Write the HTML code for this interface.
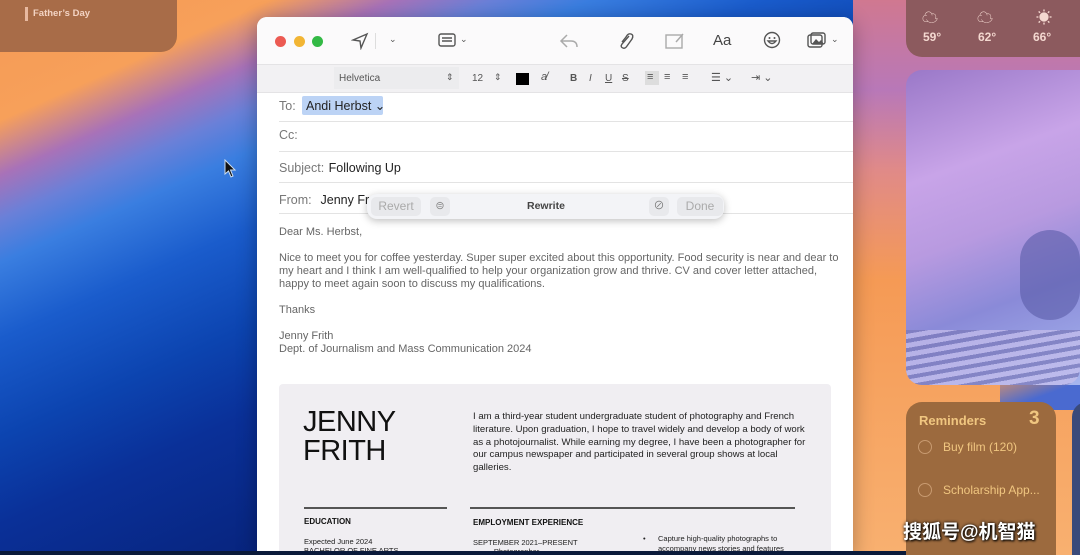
<!DOCTYPE html>
<html><head><meta charset="utf-8"><style>
*{margin:0;padding:0;box-sizing:border-box}
html,body{width:1080px;height:555px;overflow:hidden;background:#0a2a8a}
body{position:relative;font-family:"Liberation Sans","Noto Sans CJK SC",sans-serif}
.bg{position:absolute;left:0;top:0;width:1080px;height:555px;
background:linear-gradient(156deg,#f59a55 0px,#f7a05a 110px,#a872b8 160px,#6a80d8 200px,#3a7ee0 240px,#1a5ccc 310px,#0c44b0 400px,#0a3098 480px,#061e70 680px,#061e70 1200px)}
.a{position:absolute}
.win{left:257px;top:17px;width:596px;height:538px;background:#fff;border-radius:10px 10px 0 0;overflow:hidden;box-shadow:0 4px 20px rgba(0,0,0,.3)}
.tb{left:0;top:0;width:596px;height:47px;background:#fbfafb}
.fb{left:0;top:47px;width:596px;height:29px;background:#f2f1f3;border-top:1px solid #e4e3e5;border-bottom:1px solid #e4e3e5;font-size:10px;color:#555}
.dot{width:11px;height:11px;border-radius:50%;top:19px}
.line{left:22px;width:574px;height:1px;background:#e3e3e3}
.lbl{font-size:12.5px;color:#777}
.val{font-size:12.5px;color:#222}
.body{left:22px;font-size:11px;color:#666;line-height:13px}
.card{left:22px;top:367px;width:552px;height:171px;background:#f0eef2;border-radius:4px 4px 0 0}
.ic{stroke:#555;fill:none;stroke-width:1.4}
.wd{border-radius:16px}
</style></head><body>
<div class="bg"></div>
<div class="a" style="left:853px;top:0;width:227px;height:555px;background:linear-gradient(180deg,#d07890 0,#b878b8 90px,#e08a88 170px,#f59a55 280px,#f8b070 555px)"></div>
<div class="a" style="left:1000px;top:370px;width:80px;height:40px;background:linear-gradient(160deg,#f59a55,#4a6ad0 60%)"></div>
<!-- left widget -->
<div class="a wd" style="left:-20px;top:-20px;width:197px;height:72px;background:#a86c48"></div>
<div class="a" style="left:25px;top:7px;width:3px;height:14px;background:#e8b9a0"></div>
<div class="a" style="left:33px;top:8px;font-size:9.5px;font-weight:bold;color:#f3d3c3">Father’s Day</div>
<!-- right widgets -->
<div class="a wd" style="left:906px;top:-20px;width:190px;height:77px;background:#8c5a5e"></div>
<div class="a" style="left:922px;top:4px;font-size:16px;color:#f4d8d0">☁</div>
<div class="a" style="left:977px;top:4px;font-size:16px;color:#f4d8d0">☁</div>
<div class="a" style="left:1036px;top:4px;font-size:16px;color:#f4d8d0">☀</div>
<div class="a" style="left:923px;top:30px;font-size:12px;font-weight:bold;color:#f4d8d0">59°</div>
<div class="a" style="left:978px;top:30px;font-size:12px;font-weight:bold;color:#f4d8d0">62°</div>
<div class="a" style="left:1033px;top:30px;font-size:12px;font-weight:bold;color:#f4d8d0">66°</div>
<div class="a wd" style="left:906px;top:70px;width:190px;height:315px;background:linear-gradient(160deg,#9a78c8 0%,#c8a4e8 30%,#b89ae0 50%,#8a8ad8 70%,#a8b8f0 100%)"></div>
<div class="a" style="left:906px;top:330px;width:174px;height:55px;border-radius:0 0 16px 16px;background:repeating-linear-gradient(170deg,#7a78b8 0 4px,#c8c0ec 4px 9px);opacity:.7"></div>
<div class="a" style="left:1020px;top:230px;width:60px;height:90px;background:#5a5ca8;border-radius:30px;opacity:.6"></div>
<div class="a wd" style="left:906px;top:402px;width:150px;height:170px;background:#9c6a3e"></div>
<div class="a wd" style="left:1072px;top:402px;width:30px;height:170px;background:#3a4a7a"></div>
<div class="a" style="left:919px;top:413px;font-size:13px;font-weight:bold;color:#f0c680">Reminders</div>
<div class="a" style="left:1029px;top:408px;font-size:19px;font-weight:bold;color:#f0c680">3</div>
<div class="a" style="left:918px;top:440px;width:14px;height:14px;border:1.5px solid #c89a70;border-radius:50%"></div>
<div class="a" style="left:943px;top:440px;font-size:12px;color:#f0c680">Buy film (120)</div>
<div class="a" style="left:918px;top:483px;width:14px;height:14px;border:1.5px solid #c89a70;border-radius:50%"></div>
<div class="a" style="left:943px;top:483px;font-size:12px;color:#f0c680">Scholarship App...</div>
<div class="a" style="left:903px;top:517px;font-size:19px;font-weight:bold;color:#fff;text-shadow:0 0 3px #000,1px 1px 2px #000">搜狐号@机智猫</div>
<!-- cursor -->
<svg class="a" style="left:224px;top:159px" width="14" height="20"><path d="M1 1 L1 15 L4.5 12 L7 18 L9 17 L6.5 11 L11 11 Z" fill="#111" stroke="#cde" stroke-width="1"/></svg>
<!-- window -->
<div class="a win">
 <div class="a tb"></div>
 <div class="a dot" style="left:18px;background:#ec5a52"></div>
 <div class="a dot" style="left:37px;background:#f2b534"></div>
 <div class="a dot" style="left:55px;background:#33b945"></div>
 <svg class="a" style="left:94px;top:15px" width="18" height="18"><path class="ic" d="M16 2 L2 8 L9 9 L10 16 Z"/></svg>
 <div class="a" style="left:118px;top:16px;width:1px;height:16px;background:#ddd"></div>
 <div class="a" style="left:132px;top:17px;font-size:9px;color:#555">⌄</div>
 <svg class="a" style="left:181px;top:16px" width="18" height="14"><rect class="ic" x="1" y="1" width="16" height="12" rx="2"/><path class="ic" d="M4 5h10M4 8h10"/></svg>
 <div class="a" style="left:203px;top:17px;font-size:9px;color:#555">⌄</div>
 <svg class="a" style="left:302px;top:15px" width="20" height="18"><path d="M8 3 L2 9 L8 15 M2 9 H12 Q18 9 18 15" stroke="#aaa" fill="none" stroke-width="1.5"/></svg>
 <svg class="a" style="left:360px;top:14px" width="18" height="20"><path class="ic" d="M12 5 L5 13 Q3 16 6 17 Q8 18 10 15 L15 8 Q17 4 14 3 Q11 2 9 6 L5 11"/></svg>
 <svg class="a" style="left:408px;top:15px" width="20" height="18"><rect x="1" y="3" width="16" height="13" fill="none" stroke="#aaa" stroke-width="1.4"/><path d="M11 10 L18 2" stroke="#aaa" stroke-width="1.5"/></svg>
 <div class="a" style="left:456px;top:15px;font-size:15px;color:#444">Aa</div>
 <svg class="a" style="left:506px;top:14px" width="18" height="18"><circle class="ic" cx="9" cy="9" r="7.5"/><circle cx="6.5" cy="7" r="1" fill="#555"/><circle cx="11.5" cy="7" r="1" fill="#555"/><path class="ic" d="M5 10 Q9 15 13 10 Z"/></svg>
 <svg class="a" style="left:550px;top:15px" width="22" height="18"><rect class="ic" x="1" y="3" width="14" height="12" rx="2"/><rect class="ic" x="4" y="1" width="14" height="11" rx="2" fill="#fbfafb"/><path d="M5 12 L9 7 L12 10 L14 8 L17 12Z" fill="#555"/></svg>
 <div class="a" style="left:574px;top:17px;font-size:9px;color:#555">⌄</div>
 <div class="a fb">
  <div class="a" style="left:77px;top:2px;width:125px;height:22px;background:#ececee"></div>
  <div class="a" style="left:82px;top:8px">Helvetica</div>
  <div class="a" style="left:189px;top:7px;font-size:9px">⇕</div>
  <div class="a" style="left:215px;top:8px">12</div>
  <div class="a" style="left:237px;top:7px;font-size:9px">⇕</div>
  <div class="a" style="left:259px;top:8px;width:13px;height:12px;background:#000"></div>
  <div class="a" style="left:284px;top:6px;font-size:11px;font-style:italic">a̸</div>
  <div class="a" style="left:313px;top:8px;font-weight:bold">B</div>
  <div class="a" style="left:332px;top:8px;font-style:italic">I</div>
  <div class="a" style="left:348px;top:8px;text-decoration:underline">U</div>
  <div class="a" style="left:365px;top:8px;text-decoration:line-through">S</div>
  <div class="a" style="left:388px;top:6px;width:14px;height:14px;background:#ddd"></div>
  <div class="a" style="left:390px;top:6px;font-size:11px">≡</div>
  <div class="a" style="left:407px;top:6px;font-size:11px">≡</div>
  <div class="a" style="left:425px;top:6px;font-size:11px">≡</div>
  <div class="a" style="left:454px;top:6px;font-size:11px">☰ ⌄</div>
  <div class="a" style="left:494px;top:6px;font-size:11px">⇥ ⌄</div>
 </div>
 <div class="a" style="left:22px;top:80px" ><span class="lbl">To:</span></div>
 <div class="a" style="left:45px;top:79px;height:19px;width:81px;background:#bcd3f5;border-radius:2px"></div>
 <div class="a val" style="left:49px;top:81px">Andi Herbst ⌄</div>
 <div class="a line" style="top:104px"></div>
 <div class="a lbl" style="left:22px;top:111px">Cc:</div>
 <div class="a line" style="top:134px"></div>
 <div class="a" style="left:22px;top:142px"><span class="lbl">Subject:</span> <span class="val">Following Up</span></div>
 <div class="a line" style="top:165px"></div>
 <div class="a" style="left:22px;top:174px"><span class="lbl">From:</span>&nbsp; <span class="val">Jenny Fr</span></div>
 <div class="a line" style="top:196px"></div>
 <div class="a" style="left:110px;top:177px;width:357px;height:25px;background:#f3f4f7;border-radius:10px;box-shadow:0 2px 8px rgba(0,0,0,.25)"></div>
 <div class="a" style="left:114px;top:180px;width:50px;height:19px;background:#e8e9ec;border-radius:5px;font-size:12px;color:#aaa;text-align:center;line-height:19px">Revert</div>
 <div class="a" style="left:173px;top:180px;width:20px;height:19px;background:#e8e9ec;border-radius:5px;font-size:11px;color:#888;text-align:center;line-height:19px">⊜</div>
 <div class="a" style="left:270px;top:183px;font-size:10.5px;font-weight:bold;color:#444">Rewrite</div>
 <div class="a" style="left:392px;top:180px;width:20px;height:19px;background:#e8e9ec;border-radius:5px;font-size:11px;color:#777;text-align:center;line-height:19px">⊘</div>
 <div class="a" style="left:420px;top:180px;width:46px;height:19px;background:#e8e9ec;border-radius:5px;font-size:12px;color:#aaa;text-align:center;line-height:19px">Done</div>
 <div class="a body" style="top:209px">Dear Ms. Herbst,</div>
 <div class="a body" style="top:235px;width:560px">Nice to meet you for coffee yesterday. Super super excited about this opportunity. Food security is near and dear to my heart and I think I am well-qualified to help your organization grow and thrive. CV and cover letter attached, happy to meet again soon to discuss my qualifications.</div>
 <div class="a body" style="top:287px">Thanks</div>
 <div class="a body" style="top:313px">Jenny Frith<br>Dept. of Journalism and Mass Communication 2024</div>
 <div class="a card">
  <div class="a" style="left:24px;top:24px;font-size:29px;line-height:29px;color:#111;letter-spacing:-.5px">JENNY<br>FRITH</div>
  <div class="a" style="left:194px;top:27px;width:335px;font-size:9.6px;line-height:12.8px;color:#222">I am a third-year student undergraduate student of photography and French literature. Upon graduation, I hope to travel widely and develop a body of work as a photojournalist. While earning my degree, I have been a photographer for our campus newspaper and participated in several group shows at local galleries.</div>
  <div class="a" style="left:25px;top:123px;width:143px;height:1.5px;background:#555"></div>
  <div class="a" style="left:191px;top:123px;width:325px;height:1.5px;background:#555"></div>
  <div class="a" style="left:25px;top:133px;font-size:8px;font-weight:bold;color:#111">EDUCATION</div>
  <div class="a" style="left:194px;top:134px;font-size:8px;font-weight:bold;color:#111">EMPLOYMENT EXPERIENCE</div>
  <div class="a" style="left:25px;top:153px;font-size:7.5px;color:#222;line-height:9px">Expected June 2024<br>BACHELOR OF FINE ARTS</div>
  <div class="a" style="left:194px;top:154px;font-size:7.5px;color:#222;line-height:9px">SEPTEMBER 2021–PRESENT<br>&nbsp;&nbsp;&nbsp;&nbsp;&nbsp;&nbsp;&nbsp;&nbsp;&nbsp;&nbsp;Photographer</div>
  <div class="a" style="left:364px;top:150px;font-size:7.5px;color:#222">•</div>
  <div class="a" style="left:379px;top:150px;font-size:7.5px;color:#222;line-height:10px">Capture high-quality photographs to<br>accompany news stories and features</div>
 </div>
</div>
<div class="a" style="left:0;top:551px;width:906px;height:4px;background:#0a1a3a"></div>
</body></html>
